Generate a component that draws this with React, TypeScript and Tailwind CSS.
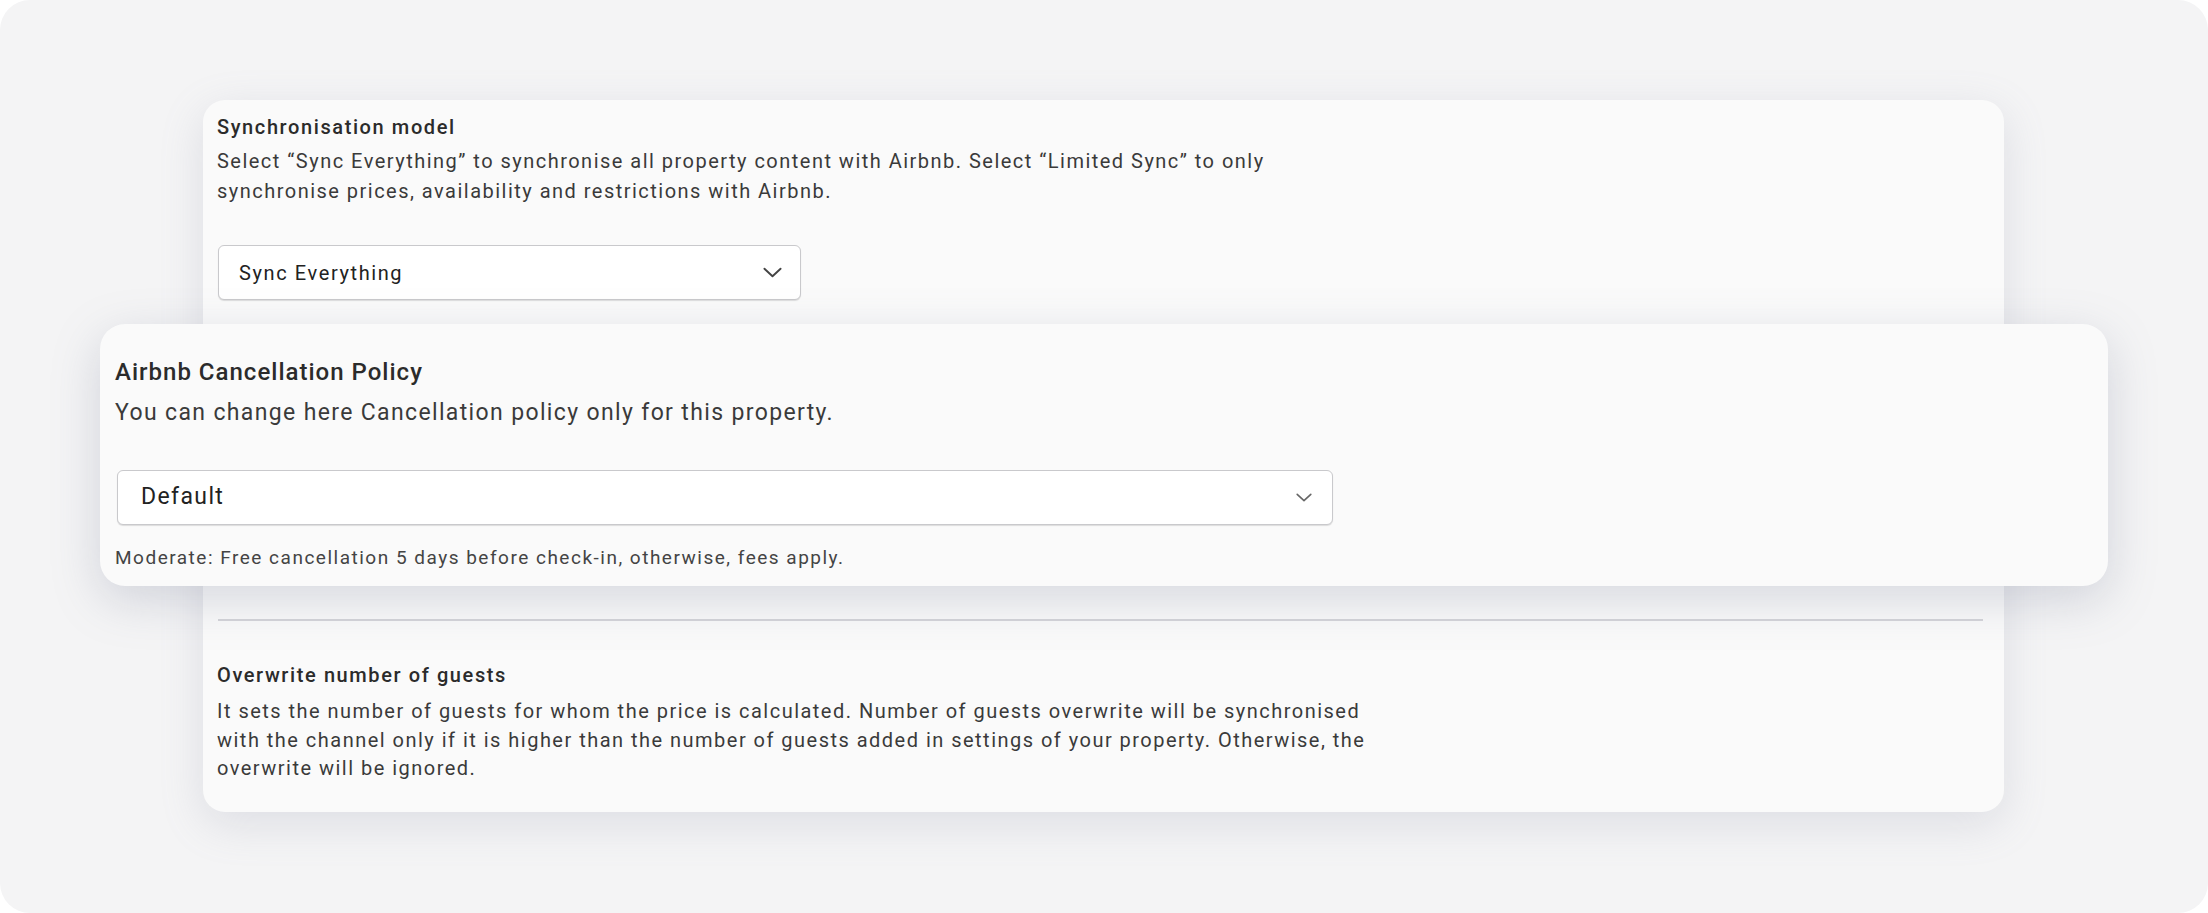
import React from "react";

const font = { fontFamily: "Roboto, 'Noto Sans', Arial, sans-serif" };

function Chevron({ className }: { className?: string }) {
  return (
    <svg viewBox="0 0 20 11" className={className} fill="none">
      <polyline
        points="1.5,1.5 10,9.5 18.5,1.5"
        stroke="currentColor"
        strokeWidth="2"
        strokeLinecap="round"
        strokeLinejoin="round"
      />
    </svg>
  );
}

function SelectBox({
  value,
  className,
  textClass,
  chevronClass,
}: {
  value: string;
  className: string;
  textClass: string;
  chevronClass: string;
}) {
  return (
    <div
      className={`flex items-center justify-between rounded-[6px] border border-[#c9c9cc] bg-white shadow-[0_1px_1px_rgba(0,0,0,0.12)] ${className}`}
    >
      <span className={textClass}>{value}</span>
      <Chevron className={chevronClass} />
    </div>
  );
}

export default function App() {
  return (
    <div className="w-[2208px] h-[913px] bg-white" style={font}>
      <div className="relative w-full h-full rounded-[30px] bg-[#f4f4f5] pl-[203px] pt-[100px]">
        {/* main card */}
        <div className="w-[1801px] h-[712px] rounded-[22px] bg-[#fafafa] shadow-[0_12px_44px_rgba(130,135,160,0.2)] px-[14px] pt-[13px] flex flex-col">
          <h3 className="text-[20px] leading-[28px] font-medium tracking-[0.08em] text-[#2b2b2b]">
            Synchronisation model
          </h3>
          <p className="mt-[5px] max-w-[1170px] text-[20px] leading-[30px] tracking-[0.074em] text-[#3a3a3a]">
            Select “Sync Everything” to synchronise all property content with Airbnb. Select “Limited Sync” to only
            synchronise prices, availability and restrictions with Airbnb.
          </p>
          <SelectBox
            value="Sync Everything"
            className="mt-[39px] ml-px w-[583px] h-[55px] pl-[20px] pr-[18px]"
            textClass="text-[20px] tracking-[0.08em] text-[#222]"
            chevronClass="w-[19px] h-[11px] text-[#444]"
          />

          <div className="mt-[319px] ml-px w-[1765px] h-[2px] bg-[#d4d4d8]" />

          <h3 className="mt-[40px] text-[20px] leading-[28px] font-medium tracking-[0.08em] text-[#2b2b2b]">
            Overwrite number of guests
          </h3>
          <p className="mt-[8px] max-w-[1170px] text-[20px] leading-[28.5px] tracking-[0.074em] text-[#3a3a3a]">
            It sets the number of guests for whom the price is calculated. Number of guests overwrite will be synchronised
            with the channel only if it is higher than the number of guests added in settings of your property. Otherwise, the
            overwrite will be ignored.
          </p>
        </div>

        {/* floating cancellation policy card */}
        <div className="absolute left-[100px] top-[324px] w-[2008px] h-[262px] rounded-[25px] bg-[#fafafa] shadow-[0_14px_48px_rgba(120,125,150,0.28)] px-[15px] pt-[32px] flex flex-col">
          <h3 className="text-[24px] leading-[32px] font-medium tracking-[0.042em] text-[#2b2b2b]">
            Airbnb Cancellation Policy
          </h3>
          <p className="mt-[9px] text-[23px] leading-[32px] tracking-[0.059em] text-[#3a3a3a]">
            You can change here Cancellation policy only for this property.
          </p>
          <SelectBox
            value="Default"
            className="mt-[41px] ml-[2px] w-[1216px] h-[55px] pl-[23px] pr-[20px]"
            textClass="text-[23px] tracking-[0.06em] text-[#222]"
            chevronClass="w-[16px] h-[9px] text-[#666]"
          />
          <p className="mt-[20px] text-[19px] leading-[26px] tracking-[0.079em] text-[#444]">
            Moderate: Free cancellation 5 days before check-in, otherwise, fees apply.
          </p>
        </div>
      </div>
    </div>
  );
}
